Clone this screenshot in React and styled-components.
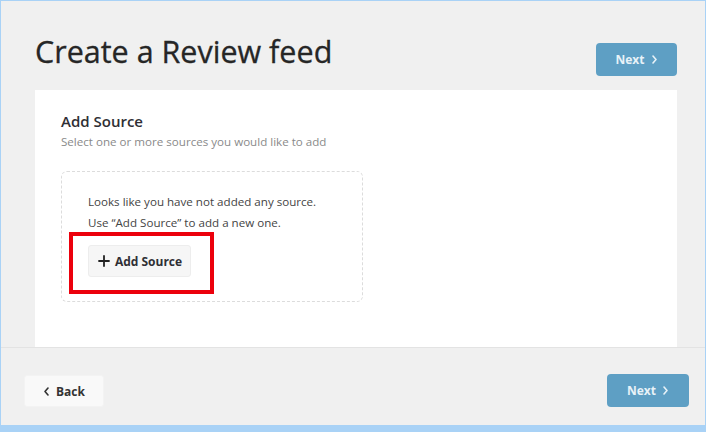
import React from "react";
import styled, { createGlobalStyle } from "styled-components";

const Global = createGlobalStyle`
  html, body { margin: 0; padding: 0; }
  body { font-family: "Open Sans", "Noto Sans", sans-serif; background: #f0f0f0; }
  * { box-sizing: border-box; }
`;

const Frame = styled.div`
  width: 706px;
  height: 432px;
  background: #f0f0f0;
  border: 1px solid #a9d2f6;
  border-bottom-width: 7px;
  display: flex;
  flex-direction: column;
  overflow: hidden;
`;

const Header = styled.div`
  height: 89px;
  flex: none;
  display: flex;
  justify-content: space-between;
  align-items: flex-start;
  padding: 0 28px 0 34px;
`;

const Title = styled.h1`
  margin: 30px 0 0;
  font-size: 30.5px;
  line-height: 40px;
  font-weight: 500;
  color: #262626;
  letter-spacing: 0;
  -webkit-text-stroke: 0.3px #262626;
`;

const PrimaryButton = styled.button`
  margin-top: ${(p) => p.$top || 0}px;
  width: ${(p) => p.$w}px;
  height: 33px;
  border: none;
  border-radius: 4px;
  background: #5e9fc4;
  color: #e8f2f8;
  font-family: "Open Sans", sans-serif;
  font-weight: 700;
  font-size: 12px;
  display: flex;
  align-items: center;
  justify-content: center;
  gap: 6px;
  padding: 0;
`;

const Panel = styled.section`
  flex: none;
  height: 257px;
  margin: 0 28px 0 34px;
  background: #fff;
  padding: 21px 26px 0;
`;

const Heading = styled.h2`
  margin: 0;
  font-size: 15px;
  line-height: 20px;
  font-weight: 600;
  color: #2f2f35;
`;

const Sub = styled.p`
  margin: 2px 0 0;
  font-size: 11.6px;
  line-height: 18px;
  color: #8a8a8a;
`;

const EmptyBox = styled.div`
  margin-top: 20px;
  width: 302px;
  height: 131px;
  border: 1px dashed #dcdcdc;
  border-radius: 6px;
  padding: 19px 26px 0;
`;

const Line = styled.p`
  margin: 0;
  font-size: 11.6px;
  line-height: 21px;
  color: #444;
`;

const Highlight = styled.div`
  position: relative;
  margin-top: 12px;
  width: fit-content;
`;

const RedFrame = styled.div`
  position: absolute;
  left: -19px;
  top: -13px;
  width: 145px;
  height: 62px;
  border: 4px solid #ec000c;
  pointer-events: none;
`;

const SourceButton = styled.button`
  width: 103px;
  height: 32px;
  background: #f6f6f6;
  border: 1px solid #ededed;
  border-radius: 3px;
  display: flex;
  align-items: center;
  justify-content: center;
  gap: 5px;
  font-family: "Open Sans", sans-serif;
  font-weight: 700;
  font-size: 12px;
  color: #2f2f35;
  padding: 0 0 0 1px;
`;

const Footer = styled.div`
  flex: 1;
  border-top: 1px solid #e3e3e3;
  display: flex;
  justify-content: space-between;
  align-items: flex-start;
  padding: 26px 16px 0 23px;
`;

const GhostButton = styled.button`
  margin-top: 1px;
  width: 80px;
  height: 32px;
  background: #f9f9f9;
  border: 1px solid #f3f3f3;
  border-radius: 3px;
  display: flex;
  align-items: center;
  justify-content: center;
  gap: 6px;
  font-family: "Open Sans", sans-serif;
  font-weight: 700;
  font-size: 12px;
  color: #333;
  padding: 0;
`;

const Chevron = ({ left, color = "currentColor" }) => (
  <svg width="7" height="9" viewBox="0 0 7 9" fill="none">
    <path
      d={left ? "M5 1 L2 4.5 L5 8" : "M2 1 L5 4.5 L2 8"}
      stroke={color}
      strokeWidth="1.6"
      strokeLinecap="round"
      strokeLinejoin="round"
    />
  </svg>
);

const Plus = () => (
  <svg width="12" height="12" viewBox="0 0 12 12" fill="none">
    <path d="M6 1 V11 M1 6 H11" stroke="#222" strokeWidth="1.8" strokeLinecap="round" />
  </svg>
);

export default function App() {
  return (
    <>
      <Global />
      <Frame>
        <Header>
          <Title>Create a Review feed</Title>
          <PrimaryButton $top={42} $w={81}>
            Next <Chevron />
          </PrimaryButton>
        </Header>
        <Panel>
          <Heading>Add Source</Heading>
          <Sub>Select one or more sources you would like to add</Sub>
          <EmptyBox>
            <Line>Looks like you have not added any source.</Line>
            <Line>Use “Add Source” to add a new one.</Line>
            <Highlight>
              <SourceButton>
                <Plus /> Add Source
              </SourceButton>
              <RedFrame />
            </Highlight>
          </EmptyBox>
        </Panel>
        <Footer>
          <GhostButton>
            <Chevron left /> Back
          </GhostButton>
          <PrimaryButton $w={82}>
            Next <Chevron />
          </PrimaryButton>
        </Footer>
      </Frame>
    </>
  );
}
